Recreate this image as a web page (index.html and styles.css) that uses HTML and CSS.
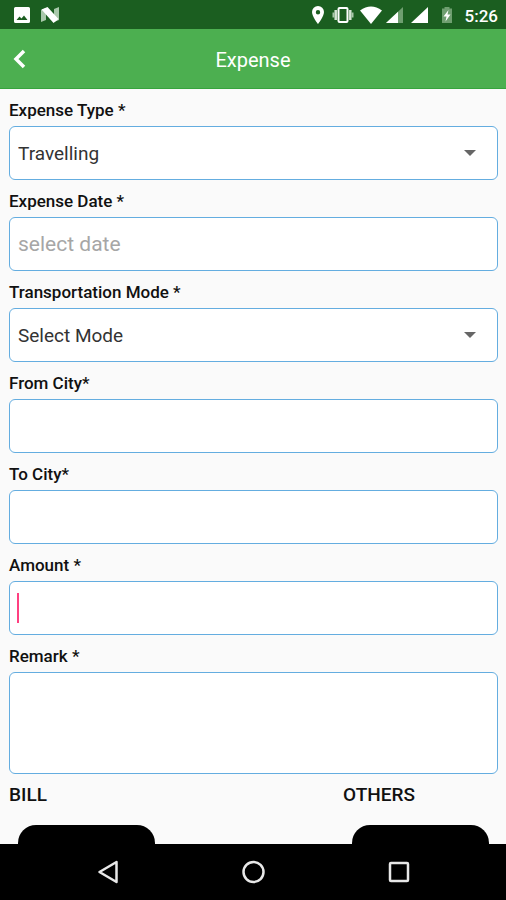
FILE: index.html
```html
<!DOCTYPE html>
<html lang="en">
<head>
<meta charset="utf-8">
<meta name="viewport" content="width=device-width, initial-scale=1">
<title>Expense</title>
<link rel="stylesheet" href="styles.css">
</head>
<body>
<div class="status">
  <svg class="icon" width="18" height="18" viewBox="0 0 18 18"><path fill="#fff" fill-rule="evenodd" d="M2.500 1h13A1.500 1.500 0 0 1 17 2.500v13a1.500 1.500 0 0 1-1.500 1.500h-13A1.500 1.500 0 0 1 1 15.500v-13A1.500 1.500 0 0 1 2.500 1zM3.500 14h11L11 9.500l-2.500 3-2-2z"/></svg>
  <svg class="icon notice" width="20" height="18" viewBox="0 0 20 18"><path fill="#a9c8aa" d="M1 4l5-2v12l-5 2zM14 3l5-2v13l-5 2z"/><path fill="#fff" d="M1.500 3.500L7.500 1 18.500 13l-5 4z"/></svg>
  <span class="spacer"></span>
  <svg class="icon" width="14" height="18" viewBox="0 0 14 18"><path fill="#fff" fill-rule="evenodd" d="M7 0a6 6 0 0 1 6 6c0 4.500-6 12-6 12S1 10.500 1 6a6 6 0 0 1 6-6zm0 4a2.200 2.200 0 1 0 0 4.400A2.200 2.200 0 0 0 7 4z"/></svg>
  <svg class="icon vibrate" width="22" height="18" viewBox="0 0 22 18"><rect x="6.500" y="2" width="9" height="14" rx="1" fill="none" stroke="#fff" stroke-width="2"/><path d="M3.700 4v10M18.300 4v10" stroke="#d4e4d4" stroke-width="2.500"/><path d="M1.500 6.500v5M20.500 6.500v5" stroke="#a9c8aa" stroke-width="2"/></svg>
  <svg class="icon wifi" width="22" height="18" viewBox="0 0 22 18"><path fill="#fff" d="M0 4.500Q11-3.500 22 4.500L11 18z"/></svg>
  <svg class="icon cell" width="18" height="18" viewBox="0 0 18 18"><path fill="#6f9f70" d="M0 17L17 1v16z"/><path fill="#fff" d="M0 17L12 5.700V17z"/></svg>
  <svg class="icon cell" width="18" height="18" viewBox="0 0 18 18"><path fill="#fff" d="M0 17L17 1v16z"/></svg>
  <svg class="icon battery" width="12" height="18" viewBox="0 0 12 18"><path fill="#6f9f70" d="M3.500 1h5v1.500H11V17H1V2.500h2.500z"/><path fill="#fff" d="M7.500 4L2.500 10.500H5.500L4.500 15.500 9.500 8.500H6.500z"/></svg>
  <time class="clock">5:26</time>
</div>
<header class="appbar">
  <button class="back" type="button" aria-label="Back"><svg width="16" height="20" viewBox="0 0 16 20"><path d="M12 2L4 10l8 8" fill="none" stroke="#fff" stroke-width="3.500"/></svg></button>
  <h1 class="title">Expense</h1>
</header>
<main class="page">
  <form>
    <label class="label" for="type">Expense Type *</label>
    <div class="field">
      <select class="control" id="type"><option>Travelling</option></select>
      <svg class="arrow" width="12" height="6" viewBox="0 0 12 6"><path fill="#666" d="M0 0h12L6 6z"/></svg>
    </div>
    <label class="label" for="date">Expense Date *</label>
    <div class="field"><input class="control date" id="date" type="text" placeholder="select date"></div>
    <label class="label" for="mode">Transportation Mode *</label>
    <div class="field">
      <select class="control" id="mode"><option>Select Mode</option></select>
      <svg class="arrow" width="12" height="6" viewBox="0 0 12 6"><path fill="#666" d="M0 0h12L6 6z"/></svg>
    </div>
    <label class="label" for="from">From City*</label>
    <div class="field"><input class="control" id="from" type="text"></div>
    <label class="label" for="to">To City*</label>
    <div class="field"><input class="control" id="to" type="text"></div>
    <label class="label" for="amount">Amount *</label>
    <div class="field"><input class="control" id="amount" type="text"><span class="caret"></span></div>
    <label class="label" for="remark">Remark *</label>
    <div class="field"><textarea class="control remark" id="remark"></textarea></div>
    <div class="uploads">
      <section class="upload"><h2 class="heading">BILL</h2><button class="tile" type="button" aria-label="Add bill"></button></section>
      <section class="upload"><h2 class="heading">OTHERS</h2><button class="tile" type="button" aria-label="Add others"></button></section>
    </div>
  </form>
</main>
<nav class="navbar">
  <button class="key" type="button" aria-label="Back"><svg width="26" height="26" viewBox="0 0 26 26"><path d="M22.500 3v20L5.500 13z" fill="none" stroke="#e8e8e8" stroke-width="2.500" stroke-linejoin="round"/></svg></button>
  <button class="key" type="button" aria-label="Home"><svg width="26" height="26" viewBox="0 0 26 26"><circle cx="13.500" cy="13" r="10" fill="none" stroke="#e8e8e8" stroke-width="2.500"/></svg></button>
  <button class="key" type="button" aria-label="Recent apps"><svg width="26" height="26" viewBox="0 0 26 26"><rect x="4" y="4" width="18" height="18" rx="1" fill="none" stroke="#e8e8e8" stroke-width="2.500"/></svg></button>
</nav>
</body>
</html>
```
FILE: styles.css
```css
* {
  box-sizing: border-box;
}

body {
  margin: 0;
  height: 100vh;
  display: flex;
  flex-direction: column;
  overflow: hidden;
  background: #fafafa;
  color: #111;
  font-family: Roboto, sans-serif;
}

button {
  display: flex;
  align-items: center;
  justify-content: center;
  padding: 0;
  border: 0;
  background: none;
}

.status {
  flex: none;
  display: flex;
  align-items: center;
  height: 29px;
  padding: 0 8px 0 13px;
  background: #1b5e20;
  color: #fff;
}

.icon {
  flex: none;
}

.notice {
  margin-left: 9px;
}

.spacer {
  flex: 1;
}

.vibrate {
  margin-left: 7px;
}

.wifi {
  margin-left: 6px;
}

.cell {
  margin-left: 4px;
}

.cell + .cell {
  margin-left: 7px;
}

.battery {
  margin-left: 12px;
}

.clock {
  margin-left: 12px;
  padding-top: 2px;
  font-size: 17px;
  font-weight: 500;
}

.appbar {
  flex: none;
  display: grid;
  grid-template-columns: 40px 1fr 40px;
  align-items: center;
  height: 60px;
  background: #4caf50;
  border-bottom: 1px solid #36a43d;
  color: #fff;
}

.back {
  height: 40px;
}

.title {
  margin: 0;
  padding-top: 3px;
  text-align: center;
  font-size: 20px;
  font-weight: 400;
}

.page {
  flex: 1;
  min-height: 0;
  overflow: hidden;
  padding: 0 8px 0 9px;
}

.label {
  display: block;
  height: 37px;
  padding-top: 3px;
  line-height: 36px;
  font-size: 17px;
  font-weight: 500;
}

.field {
  position: relative;
}

.control {
  display: block;
  width: 100%;
  height: 54px;
  padding: 0 8px;
  appearance: none;
  border: 1px solid #64ade0;
  border-radius: 6px;
  outline: 0;
  background: #fff;
  color: #333;
  font-family: inherit;
  font-size: 19px;
  font-weight: 400;
}

.date {
  font-size: 21px;
}

.control::placeholder {
  color: #a6a6a6;
  opacity: 1;
}

.remark {
  height: 102px;
  padding: 8px;
  resize: none;
}

.arrow {
  position: absolute;
  top: 24px;
  right: 22px;
  pointer-events: none;
}

.caret {
  position: absolute;
  top: 12px;
  left: 8px;
  width: 2px;
  height: 30px;
  background: #ff4081;
}

.uploads {
  display: flex;
  justify-content: space-between;
}

.upload {
  width: 155px;
}

.heading {
  margin: 0;
  height: 51px;
  line-height: 42px;
  font-size: 19px;
  font-weight: 500;
}

.tile {
  width: 137px;
  height: 100px;
  margin: 0 9px;
  border-radius: 18px;
  background: #000;
}

.navbar {
  flex: none;
  display: flex;
  justify-content: center;
  gap: 32px;
  height: 56px;
  background: #000;
}

.key {
  width: 114px;
  height: 56px;
}
```
